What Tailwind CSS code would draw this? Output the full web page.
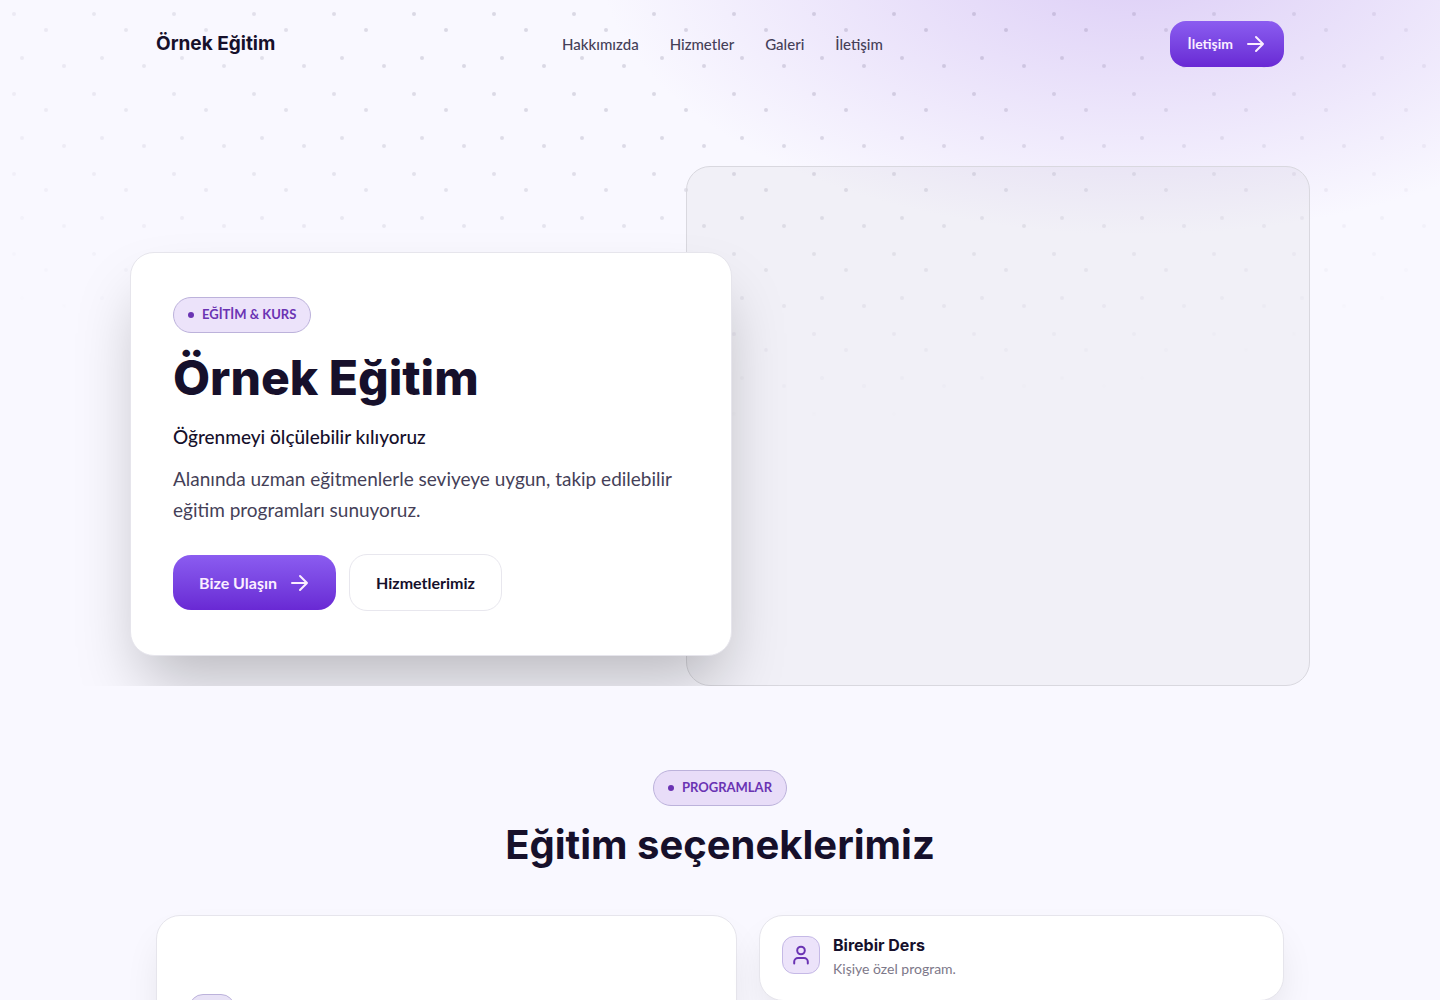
<!DOCTYPE html>
<html lang="tr">
<head>
  <meta charset="utf-8" />
  <meta name="viewport" content="width=device-width, initial-scale=1" />
  <title>Örnek Eğitim</title>
  <script src="https://cdn.jsdelivr.net/npm/@tailwindcss/browser@4"></script>
</head>

<body class="bg-[#f9f8ff] font-['Lato',sans-serif] text-[#16102b]">

<!-- Hero: glow, dot pattern, navigation and intro card -->
<div class="relative isolate overflow-hidden">
  <div class="absolute inset-0 -z-10 bg-[radial-gradient(540px_280px_at_79%_-45px,#dccdf6,#f9f8ff00)]"></div>
  <svg class="absolute inset-x-0 top-0 -z-10 h-[440px] w-full mask-[radial-gradient(ellipse_1000px_430px_at_50%_0,#000,#000_30%,transparent)]" aria-hidden="true">
    <defs>
      <pattern id="dots" width="80" height="80" patternUnits="userSpaceOnUse">
        <g fill="#100a30" fill-opacity=".13">
          <circle cx="14" cy="14" r="2" />
          <circle cx="46" cy="30" r="2" />
          <circle cx="22" cy="58" r="2" />
          <circle cx="64" cy="66" r="2" />
        </g>
      </pattern>
    </defs>
    <rect width="100%" height="100%" fill="url(#dots)" />
  </svg>

  <header class="mx-auto flex h-[88px] max-w-[1176px] items-center justify-between px-6">
    <a href="#" class="font-['Inter',sans-serif] text-[19px] font-bold">Örnek Eğitim</a>
    <nav class="flex gap-[31px] text-[15px] font-medium text-[#453f58]">
      <a href="#hakkimizda">Hakkımızda</a>
      <a href="#hizmetler">Hizmetler</a>
      <a href="#galeri">Galeri</a>
      <a href="#iletisim">İletişim</a>
    </nav>
    <a href="#iletisim" class="flex h-[46px] items-center gap-[13px] rounded-2xl bg-linear-to-b from-[#8b5cf0] to-[#6928d4] px-[18px] text-sm font-bold text-[#fbeeff]">
      İletişim
      <svg class="size-5" viewBox="0 0 20 20" fill="none" stroke="currentColor" stroke-width="2" stroke-linecap="round" stroke-linejoin="round"><path d="M2 10h15M10 3l7 7-7 7" /></svg>
    </a>
  </header>

  <main class="mx-auto mt-[78px] grid max-w-[1180px] grid-cols-[556fr_46fr_578fr]">
    <div class="col-start-2 col-end-4 row-start-1 h-[520px] rounded-3xl border border-[#d9d8df] bg-[#5a5a5a]/5"></div>
    <div class="z-10 col-start-1 col-end-3 row-start-1 mb-[30px] self-end rounded-3xl border border-[#e6e5ec] bg-white px-[42px] py-11 shadow-[0_36px_64px_-12px_rgb(0_0_0/0.26)]">
      <div class="inline-flex h-9 items-center gap-2 rounded-full border border-[#bcb2db] bg-[#ece3fa] px-[14px] text-[13px] font-bold text-[#6a33b3]">
        <span class="size-1.5 rounded-full bg-current"></span>EĞİTİM &amp; KURS
      </div>
      <h1 class="mt-[17px] font-['Inter',sans-serif] text-[48px] leading-[56px] font-extrabold">Örnek Eğitim</h1>
      <p class="mt-[17px] text-[19px] leading-7 font-medium">Öğrenmeyi ölçülebilir kılıyoruz</p>
      <p class="mt-3 text-[19px] leading-[31px] text-[#453f58]">Alanında uzman eğitmenlerle seviyeye uygun, takip edilebilir eğitim programları sunuyoruz.</p>
      <div class="mt-[29px] flex items-center gap-[13px]">
        <a href="#iletisim" class="flex h-[55px] items-center gap-[13px] rounded-[18px] bg-linear-to-b from-[#8b5cf0] to-[#6928d4] px-[26px] text-base font-bold text-[#fbeeff]">
          Bize Ulaşın
          <svg class="size-5" viewBox="0 0 20 20" fill="none" stroke="currentColor" stroke-width="2" stroke-linecap="round" stroke-linejoin="round"><path d="M2 10h15M10 3l7 7-7 7" /></svg>
        </a>
        <a href="#hizmetler" class="flex h-[57px] items-center rounded-[18px] border border-[#e8e7ee] bg-white px-[26px] text-base font-bold">Hizmetlerimiz</a>
      </div>
    </div>
  </main>
</div>

<!-- Programs -->
<section id="hizmetler" class="mx-auto max-w-[1176px] px-6 pt-[84px]">
  <div class="text-center">
    <div class="inline-flex h-9 items-center gap-2 rounded-full border border-[#bcb2db] bg-[#e8ddf8] px-[14px] text-[13px] font-bold text-[#6a33b3]">
      <span class="size-1.5 rounded-full bg-current"></span>PROGRAMLAR
    </div>
    <h2 class="mt-[13px] font-['Inter',sans-serif] text-[40px] leading-[52px] font-bold">Eğitim seçeneklerimiz</h2>
  </div>
  <div class="mt-11 grid grid-cols-[581fr_525fr] items-start gap-[22px]">
    <div class="h-[360px] rounded-3xl border border-[#e6e5ec] bg-white px-8 pt-[78px] shadow-[0_20px_40px_-10px_rgb(0_0_0/0.12)]">
      <div class="size-[46px] rounded-[14px] border border-[#bcb2db] bg-[#e8e2f6]"></div>
    </div>
    <div class="flex h-[86px] gap-[13px] rounded-3xl border border-[#e6e5ec] bg-white px-[22px] pt-5 shadow-[0_20px_40px_-10px_rgb(0_0_0/0.12)]">
      <div class="grid size-[38px] place-items-center rounded-xl border border-[#c5b9e6] bg-[#ece3fa] text-[#6a33b3]">
        <svg class="size-5" viewBox="0 0 20 20" fill="none" stroke="currentColor" stroke-width="2" stroke-linecap="round"><circle cx="10" cy="5.5" r="3.8" /><path d="M3.2 18.5v-1.7a3.8 3.8 0 0 1 3.8-3.8h6a3.8 3.8 0 0 1 3.8 3.8v1.7" /></svg>
      </div>
      <div>
        <h3 class="font-['Inter',sans-serif] text-base leading-[18px] font-bold">Birebir Ders</h3>
        <p class="mt-[5px] text-sm leading-5 text-[#7d7889]">Kişiye özel program.</p>
      </div>
    </div>
  </div>
</section>
</body>
</html>
